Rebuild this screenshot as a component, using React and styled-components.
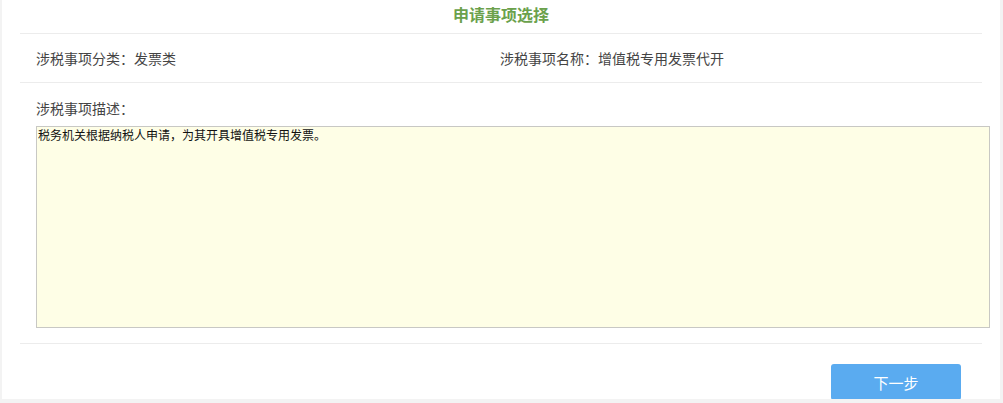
import React from 'react';
import styled, { createGlobalStyle } from 'styled-components';

const GlobalStyle = createGlobalStyle`
  html, body {
    margin: 0;
    padding: 0;
    background-color: #f3f3f3;
    font-family: 'Noto Sans CJK SC', 'Noto Sans', sans-serif;
  }
`;

const Panel = styled.div`
  margin-left: 2px;
  width: 998px;
  height: 399px;
  background-color: #ffffff;
  overflow: hidden;
`;

const Section = styled.div`
  width: 962px;
  margin-left: 18px;
`;

const Title = styled.h2`
  margin: 0;
  height: 33px;
  line-height: 28px;
  text-align: center;
  font-size: 16px;
  font-weight: bold;
  color: #6ba14c;
  border-bottom: solid 1px #ececec;
`;

const InfoRow = styled.div`
  display: grid;
  grid-template-columns: 464px 1fr;
  height: 48px;
  align-items: center;
  padding-left: 16px;
  border-bottom: solid 1px #ececec;
`;

const Field = styled.div`
  font-size: 14px;
  color: #444444;
`;

const DescBlock = styled.div`
  padding: 15px 0 15px 16px;
  border-bottom: solid 1px #ececec;
`;

const DescLabel = styled(Field)`
  line-height: 20px;
`;

const DescBox = styled.div`
  margin-top: 8px;
  width: 950px;
  height: 200px;
  padding: 0 1px;
  box-sizing: content-box;
  background-color: #fefee6;
  border: solid 1px #c8c8c4;
  font-size: 12px;
  line-height: 16px;
  color: #111111;
`;

const Actions = styled.div`
  display: flex;
  justify-content: flex-end;
  padding: 20px 21px 0 0;
`;

const NextButton = styled.button`
  width: 130px;
  height: 36px;
  border: none;
  border-radius: 3px;
  background-color: #5aabf0;
  color: #ffffff;
  font-family: 'Noto Sans CJK SC', sans-serif;
  font-size: 15px;
  cursor: pointer;
`;

const App = () => (
  <>
    <GlobalStyle />
    <Panel>
      <Section>
        <Title>申请事项选择</Title>
        <InfoRow>
          <Field>涉税事项分类：发票类</Field>
          <Field>涉税事项名称：增值税专用发票代开</Field>
        </InfoRow>
        <DescBlock>
          <DescLabel>涉税事项描述：</DescLabel>
          <DescBox>税务机关根据纳税人申请，为其开具增值税专用发票。</DescBox>
        </DescBlock>
        <Actions>
          <NextButton>下一步</NextButton>
        </Actions>
      </Section>
    </Panel>
  </>
);

export default App;
